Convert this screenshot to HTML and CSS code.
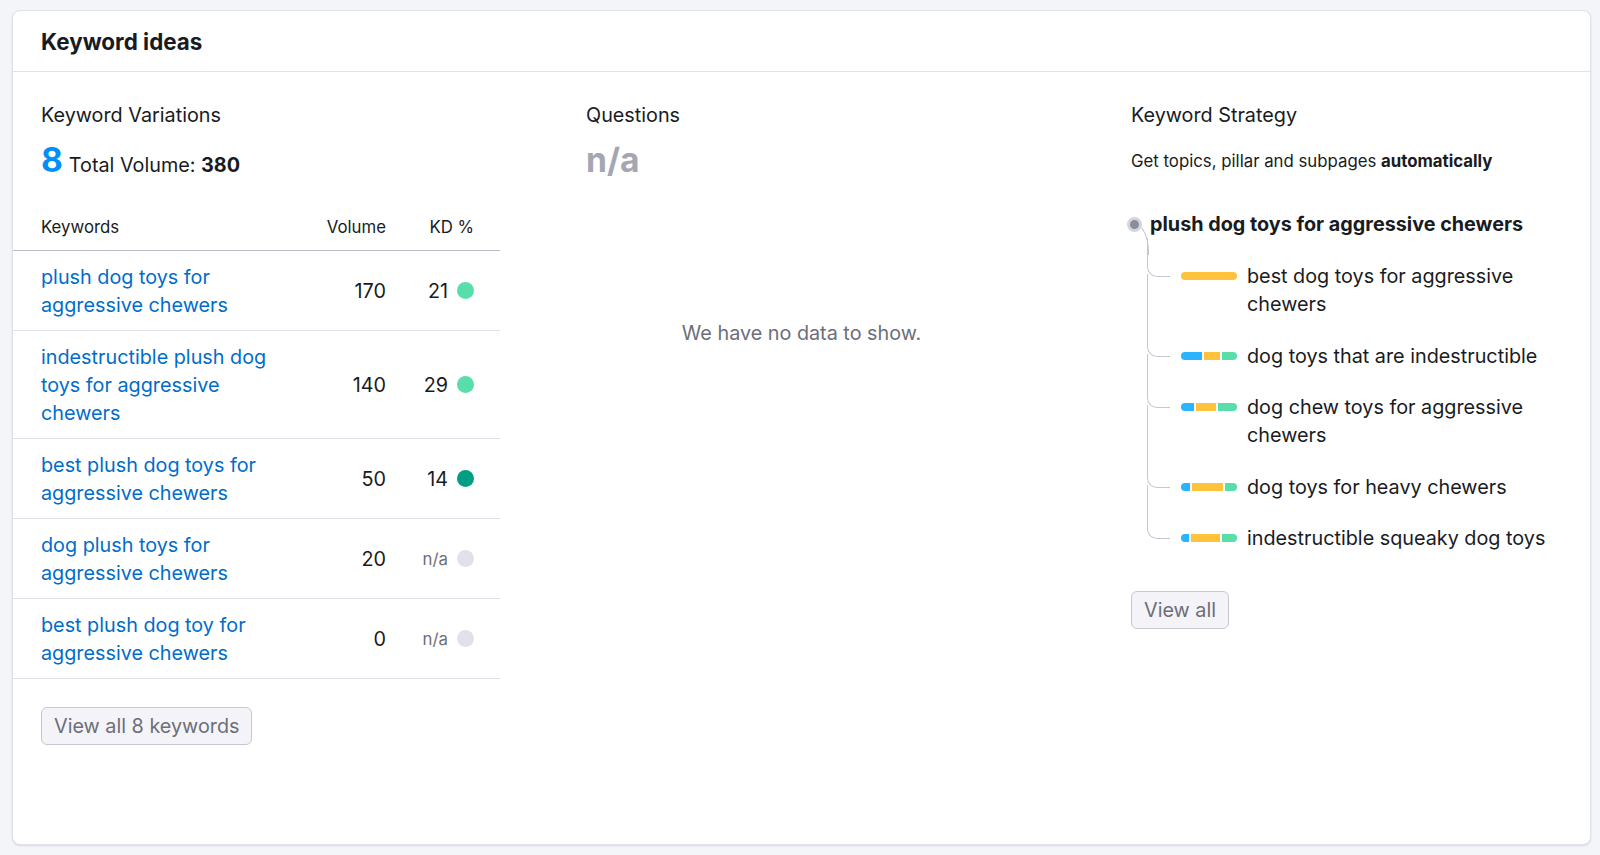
FILE: index.html
```html
<!DOCTYPE html>
<html lang="en">
<head>
<meta charset="utf-8">
<title>Keyword ideas</title>
<link rel="stylesheet" href="styles.css">
</head>
<body>
<div class="card">
  <div class="card-head"><h2 class="card-title">Keyword ideas</h2></div>
  <div class="card-body">
    <section class="col">
      <h3 class="col-title">Keyword Variations</h3>
      <div class="metric"><span class="big blue">8</span><span class="metric-label">Total Volume: <b>380</b></span></div>
      <div class="table">
        <div class="tr th"><div>Keywords</div><div class="num">Volume</div><div class="num">KD %</div></div>
        <div class="tr"><a class="kw" href="#">plush dog toys for aggressive chewers</a><div class="num">170</div><div class="kd">21<i class="dot light"></i></div></div>
        <div class="tr"><a class="kw" href="#">indestructible plush dog toys for aggressive chewers</a><div class="num">140</div><div class="kd">29<i class="dot light"></i></div></div>
        <div class="tr"><a class="kw" href="#">best plush dog toys for aggressive chewers</a><div class="num">50</div><div class="kd">14<i class="dot dark"></i></div></div>
        <div class="tr"><a class="kw" href="#">dog plush toys for aggressive chewers</a><div class="num">20</div><div class="kd"><span class="na">n/a</span><i class="dot none"></i></div></div>
        <div class="tr"><a class="kw" href="#">best plush dog toy for aggressive chewers</a><div class="num">0</div><div class="kd"><span class="na">n/a</span><i class="dot none"></i></div></div>
      </div>
      <button class="btn btn-left">View all 8 keywords</button>
    </section>

    <section class="col">
      <h3 class="col-title">Questions</h3>
      <div class="metric"><span class="big gray">n/a</span></div>
      <p class="empty">We have no data to show.</p>
    </section>

    <section class="col">
      <h3 class="col-title">Keyword Strategy</h3>
      <p class="subtitle">Get topics, pillar and subpages <b>automatically</b></p>
      <div class="tree">
        <div class="root"><i class="root-dot"></i><span>plush dog toys for aggressive chewers</span></div>
        <div class="kids">
          <div class="kid"><span class="bar"><i class="seg y" style="width:56px"></i></span><span class="kid-text">best dog toys for aggressive chewers</span></div>
          <div class="kid"><span class="bar"><i class="seg b" style="width:21px"></i><i class="seg y" style="width:16px"></i><i class="seg g" style="width:15px"></i></span><span class="kid-text">dog toys that are indestructible</span></div>
          <div class="kid"><span class="bar"><i class="seg b" style="width:13px"></i><i class="seg y" style="width:20px"></i><i class="seg g" style="width:19px"></i></span><span class="kid-text">dog chew toys for aggressive chewers</span></div>
          <div class="kid"><span class="bar"><i class="seg b" style="width:9px"></i><i class="seg y" style="width:31px"></i><i class="seg g" style="width:12px"></i></span><span class="kid-text">dog toys for heavy chewers</span></div>
          <div class="kid"><span class="bar"><i class="seg b" style="width:8px"></i><i class="seg y" style="width:29px"></i><i class="seg g" style="width:15px"></i></span><span class="kid-text">indestructible squeaky dog toys</span></div>
        </div>
      </div>
      <button class="btn btn-right">View all</button>
    </section>
  </div>
</div>
</body>
</html>
```

FILE: styles.css
```css
* { box-sizing: border-box; }
html, body { margin: 0; padding: 0; }
body {
  background: #f4f5f9;
  font-family: Inter, "Noto Sans", "Liberation Sans", sans-serif;
  color: #191b23;
  padding: 10px 9px 10px 12px;
}
.card {
  background: #fff;
  border: 1px solid #e0e1e9;
  border-radius: 8px;
  box-shadow: 0 1px 2px rgba(25, 27, 35, 0.12);
  height: 835px;
}
.card-head {
  height: 61px;
  border-bottom: 1px solid #e0e1e9;
  display: flex;
  align-items: center;
  padding: 0 28px;
}
.card-title {
  margin: 0;
  font-size: 22.4px;
  font-weight: 700;
  line-height: 28px;
  padding-top: 1px;
}
.card-body {
  display: grid;
  grid-template-columns: repeat(3, 1fr);
  column-gap: 114px;
  padding: 29px 28px 0 28px;
}
.col { min-width: 0; }
.col-title {
  margin: 0;
  font-size: 19.8px;
  font-weight: 400;
  line-height: 28px;
}
.metric {
  display: flex;
  align-items: baseline;
  gap: 6px;
  height: 40px;
  line-height: 40px;
  margin-top: 11px;
}
.big { font-size: 33.6px; font-weight: 700; }
.big.blue { color: #008ff8; }
.big.gray { color: #a4a6b3; }
.metric-label { font-size: 19.8px; }
.metric-label b { font-weight: 700; }

.table { margin: 24px -28px 0 -28px; }
.tr {
  display: grid;
  grid-template-columns: 1fr 90px 88px;
  align-items: center;
  padding: 11.5px 26px 11.5px 28px;
  border-bottom: 1px solid #e0e1e9;
  font-size: 19.8px;
  line-height: 28px;
}
.tr.th {
  font-size: 16.8px;
  line-height: 22px;
  padding: 12px 26px 12px 28px;
  border-bottom-color: #b8bbc6;
}
.num { text-align: right; }
.kw {
  color: #006dca;
  text-decoration: none;
}
.kd {
  display: flex;
  justify-content: flex-end;
  align-items: center;
  gap: 9px;
}
.na { font-size: 16.8px; color: #6c6e79; }
.dot {
  width: 17px;
  height: 17px;
  border-radius: 50%;
  display: inline-block;
  flex: none;
}
.dot.light { background: #59ddaa; }
.dot.dark { background: #009f81; }
.dot.none { background: #e0e1e9; }

.btn {
  font-family: inherit;
  font-size: 19.8px;
  color: #6c6e79;
  background: #f4f4f8;
  border: 1px solid #c4c7cf;
  border-radius: 6px;
  height: 38px;
  padding: 0 12px;
  line-height: 36px;
  cursor: pointer;
  display: block;
}
.btn-left { margin-top: 28px; }
.btn-right { margin-top: 39px; }

.empty {
  margin: 139px 0 0 0;
  text-align: center;
  font-size: 19.8px;
  line-height: 28px;
  color: #6c6e79;
}

.subtitle {
  margin: 20px 0 0 0;
  font-size: 16.8px;
  line-height: 24px;
}
.subtitle b { font-weight: 700; }
.tree { margin-top: 37px; }
.root {
  position: relative;
  display: flex;
  align-items: center;
  gap: 8px;
  font-size: 19.8px;
  font-weight: 700;
  line-height: 28px;
  margin-left: -4px;
}
.root-dot {
  width: 15px;
  height: 15px;
  border-radius: 50%;
  background: #8a8e9b;
  border: 3px solid #d3d5dd;
  flex: none;
  position: relative;
  z-index: 1;
}
.root::after {
  content: "";
  position: absolute;
  left: 7px;
  top: 14px;
  width: 14px;
  height: 30px;
  border-top: 1.5px solid #c4c7cf;
  border-right: 1.5px solid #c4c7cf;
  border-top-right-radius: 14px 28px;
}
.kids { padding-left: 16px; }
.kid {
  position: relative;
  display: flex;
  align-items: flex-start;
  gap: 10px;
  padding-left: 34px;
  margin-top: 23.5px;
  font-size: 19.8px;
  line-height: 28px;
}
.kid:first-child { margin-top: 24px; }
.kid::before {
  content: "";
  position: absolute;
  left: 0;
  top: -24px;
  width: 22px;
  height: 38px;
  border-left: 1.5px solid #c4c7cf;
  border-bottom: 1.5px solid #c4c7cf;
  border-bottom-left-radius: 10px;
}
.kid:not(:last-child)::after {
  content: "";
  position: absolute;
  left: 0;
  top: 12px;
  bottom: 0;
  border-left: 1.5px solid #c4c7cf;
}
.bar {
  flex: none;
  width: 56px;
  height: 8px;
  margin-top: 10px;
  border-radius: 4px;
  overflow: hidden;
  display: flex;
  gap: 2px;
}
.seg { display: block; height: 100%; flex: none; }
.seg.b { background: #2bb3ff; }
.seg.y { background: #ffc23d; }
.seg.g { background: #59ddaa; }
.kid-text { min-width: 0; }
```
